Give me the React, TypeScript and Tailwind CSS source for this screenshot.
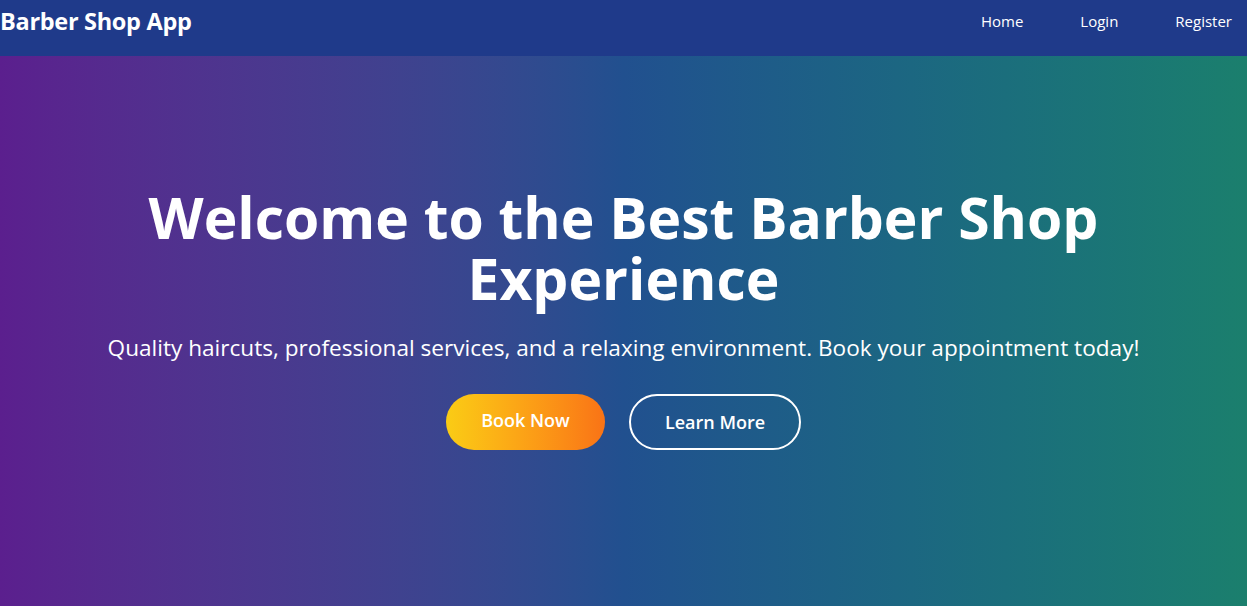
import React from 'react';

export default function App() {
  return (
    <div className="min-h-screen flex flex-col" style={{ fontFamily: '"Open Sans", "Noto Sans", sans-serif' }}>
      {/* Navbar */}
      <nav className="h-[56px] bg-[#1f3a8a] flex items-center justify-between pr-[15px]">
        <h1 className="text-[23.5px] font-bold text-white tracking-[-0.3px] -mt-[13px]">Barber Shop App</h1>
        <ul className="flex items-center gap-[57px] text-[15px] text-white -mt-[14px]">
          <li>Home</li>
          <li>Login</li>
          <li>Register</li>
        </ul>
      </nav>

      {/* Hero */}
      <section className="h-[550px] bg-gradient-to-r from-[#5b1f8e] via-[#21508f] to-[#1b7f6d] flex flex-col items-center pt-[131px] text-white text-center">
        <h2 className="text-[57px] font-bold leading-[61px] max-w-[980px]">
          Welcome to the Best Barber Shop Experience
        </h2>
        <p className="mt-[22px] text-[22.6px] leading-[34px]">
          Quality haircuts, professional services, and a relaxing environment. Book your appointment today!
        </p>
        <div className="mt-[29px] flex gap-[24px]">
          <button className="w-[159px] h-[56px] rounded-full bg-gradient-to-r from-[#facc15] to-[#f97316] text-[18px] font-semibold pb-[3px]">
            Book Now
          </button>
          <button className="w-[172px] h-[56px] rounded-full border-2 border-white text-[18px] font-semibold">
            Learn More
          </button>
        </div>
      </section>
    </div>
  );
}
